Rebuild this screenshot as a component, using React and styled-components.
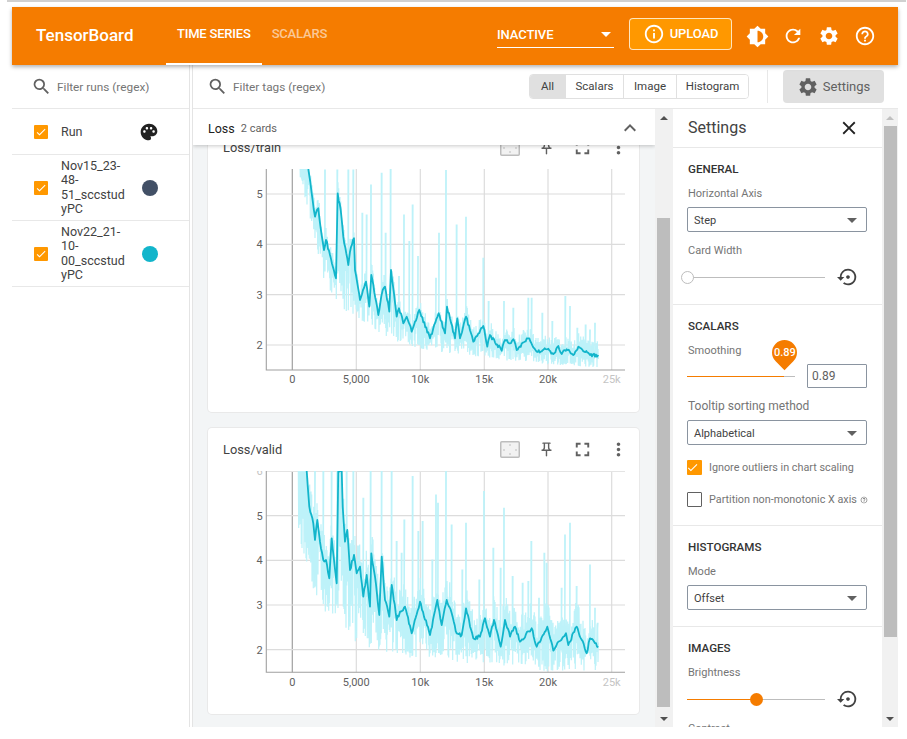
import React from "react";
import styled, { createGlobalStyle } from "styled-components";
import {
  MdBrightness6,
  MdCheck,
  MdClose,
  MdExpandLess,
  MdFullscreen,
  MdHelpOutline,
  MdInfoOutline,
  MdMoreVert,
  MdOutlinePushPin,
  MdPalette,
  MdRefresh,
  MdSearch,
  MdSettings,
  MdSettingsBackupRestore,
} from "react-icons/md";

const GlobalStyle = createGlobalStyle`
  html, body {
    margin: 0;
    height: 100%;
    overflow: hidden;
    background: #fff;
    font-family: Roboto, "Liberation Sans", sans-serif;
  }
  * { box-sizing: border-box; }
`;

const TopRule = styled.div`
  height: 2px;
  margin: 0 1px 5px 7px;
  background: #d0d0d0;
`;

const Shell = styled.div`
  width: 886px;
  height: 720px;
  margin-left: 12px;
  display: flex;
  flex-direction: column;
`;

/* header */
const Header = styled.header`
  height: 58px;
  flex: none;
  display: flex;
  align-items: center;
  padding-right: 15px;
  background: #f57c00;
  color: #fff;
  position: relative;
  z-index: 3;
  box-shadow: 0 2px 4px rgba(0, 0, 0, 0.3);
`;

const Logo = styled.div`
  width: 154px;
  padding: 0 0 3px 24px;
  font-size: 17px;
  font-weight: 500;
`;

const Tab = styled.div`
  align-self: stretch;
  display: flex;
  align-items: center;
  padding: 0 ${(p) => (p.$active ? "11px" : "10px")} 3px;
  font-size: 13px;
  font-weight: 500;
  letter-spacing: -0.2px;
  color: ${(p) => (p.$active ? "#fff" : "rgba(255, 255, 255, 0.6)")};
  border-bottom: 2px solid ${(p) => (p.$active ? "#fff" : "transparent")};
`;

const ReloadSelect = styled.div`
  width: 117px;
  height: 24px;
  margin: 0 15px 0 auto;
  display: flex;
  align-items: center;
  justify-content: space-between;
  padding: 0 3px 2px 0;
  font-size: 13px;
  font-weight: 500;
  letter-spacing: -0.1px;
  border-bottom: 1px solid #fff;
`;

const Caret = styled.span`
  width: 0;
  height: 0;
  border-left: 5px solid transparent;
  border-right: 5px solid transparent;
  border-top: 5px solid ${(p) => p.$color || "#fff"};
`;

const UploadButton = styled.div`
  width: 103px;
  height: 32px;
  margin: 0 7px 4px 0;
  padding-bottom: 1px;
  display: flex;
  align-items: center;
  justify-content: center;
  gap: 5px;
  border: 1px solid rgba(255, 255, 255, 0.75);
  border-radius: 4px;
  background: #ff9800;
  font-size: 13px;
  font-weight: 500;
  letter-spacing: -0.1px;
`;

const HeaderIcon = styled.div`
  width: 36px;
  display: flex;
  justify-content: center;
`;

/* body */
const Body = styled.div`
  flex: 1;
  min-height: 0;
  display: flex;
`;

const RunsColumn = styled.aside`
  width: 178px;
  flex: none;
  margin-right: 2px;
  border-right: 1px solid #e4e4e4;
`;

const FilterBox = styled.div`
  height: 44px;
  display: flex;
  align-items: center;
  gap: 5px;
  padding-left: ${(p) => p.$inset}px;
  font-size: 11.8px;
  color: #757575;
  border-bottom: ${(p) => (p.$ruled ? "1px solid #e8e8e8" : "none")};
  svg {
    color: #616161;
  }
`;

const RunRow = styled.div`
  height: ${(p) => p.$height}px;
  display: flex;
  align-items: center;
  padding: ${(p) => (p.$nudge ? "1px" : "0")} 0 0 22px;
  border-bottom: 1px solid #e8e8e8;
`;

const Check = styled.span`
  width: ${(p) => p.$size}px;
  height: ${(p) => p.$size}px;
  flex: none;
  display: flex;
  align-items: center;
  justify-content: center;
  border-radius: 1px;
  background: ${(p) => (p.$on ? "#ff9800" : "#fff")};
  border: ${(p) => (p.$on ? "none" : "1.5px solid #616161")};
  color: #fff;
`;

const RunName = styled.div`
  width: 66px;
  margin-left: 13px;
  font-size: 12.5px;
  line-height: 14.3px;
  color: #424242;
  overflow-wrap: anywhere;
`;

const Swatch = styled.span`
  width: 16px;
  height: 16px;
  margin-left: 15px;
  border-radius: 50%;
  background: ${(p) => p.$color};
`;

const PaletteSlot = styled.span`
  width: 20px;
  margin-left: 12px;
  display: flex;
  color: #212121;
`;

const WorkColumn = styled.div`
  flex: 1;
  min-width: 0;
  display: flex;
  flex-direction: column;
  border-left: 1px solid #e4e4e4;
`;

const Toolbar = styled.div`
  height: 44px;
  flex: none;
  display: flex;
  align-items: center;
  border-bottom: 1px solid #e8e8e8;
`;

const Chips = styled.div`
  height: 25px;
  margin: 0 0 1px auto;
  display: flex;
  border: 1px solid #e0e0e0;
  border-radius: 4px;
  overflow: hidden;
`;

const Chip = styled.div`
  width: ${(p) => p.$width}px;
  display: flex;
  align-items: center;
  justify-content: center;
  font-size: 11.5px;
  color: #424242;
  background: ${(p) => (p.$active ? "#e0e0e0" : "#fff")};
  border-left: ${(p) => (p.$first ? "none" : "1px solid #e0e0e0")};
`;

const ToolDivider = styled.div`
  width: 1px;
  height: 33px;
  margin: 0 15px 0 18px;
  background: #e8e8e8;
`;

const SettingsButton = styled.div`
  width: 101px;
  height: 33px;
  margin-right: 14px;
  display: flex;
  align-items: center;
  justify-content: center;
  gap: 4px;
  border-radius: 4px;
  background: #e0e0e0;
  color: #616161;
  font-size: 13px;
`;

const Panes = styled.div`
  flex: 1;
  min-height: 0;
  display: flex;
`;

const Main = styled.main`
  width: 462px;
  flex: none;
  display: flex;
  flex-direction: column;
  overflow: hidden;
  background: #f3f5f6;
`;

const GroupBar = styled.div`
  height: 36px;
  flex: none;
  display: flex;
  align-items: center;
  gap: 6px;
  padding: 2px 13px 0 15px;
  background: #fff;
  font-size: 12.5px;
  color: #212121;
  position: relative;
  z-index: 2;
  box-shadow: 0 1px 4px rgba(0, 0, 0, 0.22);
  small {
    font-size: 11px;
    color: #616161;
  }
  svg {
    margin-left: auto;
    color: #616161;
  }
`;

const Cards = styled.div`
  margin: -19px 0 0 15px;
  display: flex;
  flex-direction: column;
  gap: 16px;
`;

const Card = styled.section`
  width: 431px;
  height: 286px;
  flex: none;
  background: #fff;
  border-radius: 4px;
  box-shadow: 0 0 0 1px #e9e9e9;
`;

const CardHead = styled.div`
  height: 43px;
  display: flex;
  align-items: center;
  padding: 0 3px 0 15px;
  font-size: 12.8px;
  color: #424242;
`;

const CardTitle = styled.div`
  margin-right: auto;
`;

const CardAction = styled.span`
  width: 36px;
  display: flex;
  justify-content: center;
  color: #616161;
`;

const ChartSvg = styled.svg`
  display: block;
  text {
    font-family: Roboto, "Liberation Sans", sans-serif;
    font-size: 11px;
    fill: #616161;
    text-anchor: middle;
  }
`;

/* fake scrollbars, they are part of the picture */
const Scrollbar = styled.div`
  width: ${(p) => p.$width}px;
  flex: none;
  display: flex;
  flex-direction: column;
  background: #f1f1f1;
`;

const ScrollArrow = styled.div`
  height: 17px;
  flex: none;
  display: flex;
  align-items: center;
  justify-content: center;
  margin-top: ${(p) => (p.$down ? "auto" : "0")};
  &::before {
    content: "";
    border-left: 4px solid transparent;
    border-right: 4px solid transparent;
    border-bottom: ${(p) => (p.$down ? "none" : `4px solid ${p.$color}`)};
    border-top: ${(p) => (p.$down ? `4px solid ${p.$color}` : "none")};
  }
`;

const ScrollThumb = styled.div`
  height: ${(p) => p.$height}px;
  margin: ${(p) => p.$offset}px ${(p) => p.$side}px 0 2px;
  background: #bdbdbd;
`;

/* settings panel */
const Panel = styled.div`
  width: 209px;
  flex: none;
  overflow: hidden;
  background: #fff;
`;

const PanelHead = styled.div`
  height: 39px;
  display: flex;
  align-items: center;
  justify-content: space-between;
  padding: 0 22px 1px 15px;
  font-size: 16px;
  color: #424242;
  border-bottom: 1px solid #e8e8e8;
  svg {
    color: #212121;
  }
`;

const Section = styled.section`
  padding: 13px 14px ${(p) => (p.$tail ? p.$tail : 16)}px;
  border-bottom: ${(p) => (p.$open ? "none" : "1px solid #e8e8e8")};
`;

const Heading = styled.h3`
  margin: 0 0 8px 1px;
  font-size: 11.6px;
  line-height: 16px;
  font-weight: 500;
  color: #333;
`;

const FieldLabel = styled.div`
  margin: ${(p) => (p.$first ? "0" : "10px 0 0")};
  padding: 1px 0 0 1px;
  font-size: ${(p) => p.$size || 11}px;
  line-height: 15px;
  color: #757575;
`;

const SelectBox = styled.div`
  width: 180px;
  height: 25px;
  margin-top: 6px;
  display: flex;
  align-items: center;
  justify-content: space-between;
  padding: 1px 9px 0 6px;
  border: 1px solid #8a94a0;
  border-radius: 2px;
  font-size: 11px;
  color: #424242;
`;

const SliderRow = styled.div`
  width: 180px;
  height: ${(p) => p.$height}px;
  margin-top: ${(p) => p.$top}px;
  display: flex;
  align-items: center;
  gap: 12px;
  color: #424242;
`;

const Track = styled.div`
  width: ${(p) => p.$width}px;
  height: 1px;
  flex: none;
  position: relative;
  background: #bdbdbd;
`;

const TrackFill = styled.div`
  height: 1px;
  width: ${(p) => p.$fill}px;
  background: #f57c00;
`;

const Knob = styled.span`
  position: absolute;
  top: -6px;
  left: ${(p) => p.$at - 6}px;
  width: 13px;
  height: 13px;
  border-radius: 50%;
  background: ${(p) => (p.$empty ? "#fff" : "#f57c00")};
  border: ${(p) => (p.$empty ? "1px solid #bdbdbd" : "none")};
`;

const Bubble = styled.div`
  position: absolute;
  left: 85px;
  top: -36px;
  width: 25px;
  height: 25px;
  display: flex;
  align-items: center;
  justify-content: center;
  background: #f57c00;
  border-radius: 50% 50% 0 50%;
  transform: rotate(45deg);
  span {
    transform: rotate(-45deg);
    font-size: 11px;
    font-weight: 500;
    color: #fff;
  }
`;

const ValueInput = styled.div`
  width: 60px;
  height: 24px;
  display: flex;
  align-items: center;
  padding-left: 4px;
  border: 1px solid #8a94a0;
  border-radius: 1px;
  font-size: 12px;
  color: #616161;
`;

const CheckRow = styled.div`
  height: 15px;
  margin-top: ${(p) => p.$top}px;
  display: flex;
  align-items: center;
  gap: 7px;
  font-size: 10.8px;
  color: #757575;
  white-space: nowrap;
  svg {
    margin-left: -4px;
    flex: none;
  }
`;

const RULE_X = [0, 64, 128, 192, 255.7, 319.4];
const X_LABELS = ["0", "5,000", "10k", "15k", "20k", "25k"];

function rng(seed) {
  let a = seed;
  return () => {
    a = (a + 0x6d2b79f5) | 0;
    let t = Math.imul(a ^ (a >>> 15), 1 | a);
    t = (t + Math.imul(t ^ (t >>> 7), 61 | t)) ^ t;
    return ((t ^ (t >>> 14)) >>> 0) / 4294967296;
  };
}

function lerp(knots, x) {
  if (x <= knots[0][0]) return knots[0][1];
  for (let i = 1; i < knots.length; i++) {
    if (x <= knots[i][0]) {
      const [x0, y0] = knots[i - 1];
      const [x1, y1] = knots[i];
      return y0 + ((y1 - y0) * (x - x0)) / (x1 - x0);
    }
  }
  return knots[knots.length - 1][1];
}

// knots are read off the reference in 3x crop coordinates
function smoothLine(knots, seed, jitter) {
  const rand = rng(seed);
  const pts = [];
  knots.forEach(([x, y], i) => {
    pts.push([x, y]);
    const next = knots[i + 1];
    if (!next) return;
    for (let sx = x + 3; sx < next[0] - 2; sx += 3) {
      pts.push([sx, lerp(knots, sx) + (rand() - 0.5) * jitter]);
    }
  });
  return pts;
}

function rawLine(smooth, lower, spikes, seed, startX, amp) {
  const rand = rng(seed);
  const pts = [];
  let next = 0;
  let up = true;
  for (let x = startX; x <= 1195; x += 1) {
    while (next < spikes.length && spikes[next][0] <= x) {
      // spikes get a little width, they read as 1-2px bars in the reference
      pts.push([spikes[next][0] - 1, spikes[next][1]]);
      pts.push([spikes[next][0] + 1, spikes[next][1]]);
      next += 1;
    }
    const s = lerp(smooth, x);
    const l = lerp(lower, x);
    const y = up
      ? s - rand() * amp
      : l - Math.pow(rand(), 1.2) * Math.max(l - s, 0);
    pts.push([x, y]);
    up = !up;
  }
  return pts;
}

const TRAIN = {
  smooth: [[325,87],[335,160],[345,230],[355,205],[362,265],[372,330],[378,300],[390,345],[408,415],[413,160],[422,210],[430,290],[445,375],[450,335],[462,295],[465,390],[480,480],[498,425],[508,500],[514,405],[535,525],[548,450],[555,440],[568,515],[573,390],[590,530],[597,505],[610,550],[620,530],[635,575],[645,545],[658,510],[690,595],[700,565],[716,520],[735,580],[741,500],[765,595],[772,535],[780,595],[798,530],[820,605],[850,558],[862,620],[870,585],[905,632],[915,600],[930,610],[940,598],[950,630],[985,595],[1010,635],[1042,628],[1060,642],[1075,618],[1085,642],[1100,628],[1120,645],[1135,620],[1170,645],[1195,645]],
  lower: [[300,130],[340,270],[370,420],[410,490],[460,530],[520,570],[600,610],[700,635],[800,645],[900,660],[1000,670],[1190,682]],
  spikes: [[375,90],[412,90],[445,90],[460,90],[487,220],[500,225],[513,135],[545,100],[557,280],[572,87],[597,410],[612,225],[628,305],[638,195],[654,350],[708,415],[717,280],[738,92],[770,255],[798,232],[850,355],[866,485],[912,485],[940,505],[985,475],[995,475],[1027,520],[1057,545],[1096,470],[1110,500],[1132,565],[1157,555],[1170,570],[1185,550]],
  originY: 140,
  plotTop: 169,
  plotBottom: 370,
  grid: [[5, 194], [4, 244.3], [3, 294.7], [2, 345]],
  labelY: 379,
  seed: 11,
  amp: 42,
  startX: 300,
};

const VALID = {
  smooth: [[320,153],[328,260],[340,310],[345,360],[352,300],[360,365],[370,420],[378,420],[388,475],[395,355],[410,490],[415,153],[425,153],[428,260],[435,365],[442,330],[450,450],[462,405],[470,460],[480,440],[490,530],[500,465],[510,560],[514,400],[525,470],[538,585],[545,410],[555,540],[568,590],[575,495],[590,600],[600,575],[615,560],[635,640],[660,545],[690,645],[712,540],[725,615],[740,540],[755,580],[770,640],[785,645],[798,565],[820,655],[840,650],[855,595],[870,650],[882,600],[902,680],[915,600],[930,650],[945,620],[960,665],[995,625],[1010,680],[1042,620],[1060,692],[1075,665],[1098,640],[1105,675],[1130,620],[1160,700],[1170,655],[1195,682]],
  lower: [[295,340],[320,440],[355,560],[400,600],[470,680],[540,690],[630,715],[700,715],[800,730],[900,735],[1050,755],[1190,750]],
  spikes: [[300,153],[345,153],[370,153],[395,153],[412,153],[440,153],[460,153],[490,235],[512,153],[545,153],[575,153],[590,365],[605,400],[613,300],[638,170],[655,335],[668,305],[697,420],[708,225],[714,250],[738,153],[755,315],[787,450],[798,310],[838,480],[852,215],[880,385],[902,445],[912,265],[938,470],[968,490],[985,485],[994,365],[1017,535],[1033,400],[1040,430],[1085,505],[1095,345],[1110,310],[1130,500],[1170,435],[1185,565],[1193,610]],
  originY: 420,
  plotTop: 471,
  plotBottom: 672.3,
  grid: [[5, 515.7], [4, 560.3], [3, 605], [2, 649.7]],
  labelY: 681.7,
  seed: 29,
  amp: 80,
  startX: 295,
  topRule: true,
};

function Chart({ data }) {
  const toPage = (pts) =>
    pts.map(([x, y]) => `${(200 + x / 3).toFixed(1)},${(data.originY + y / 3).toFixed(1)}`).join(" ");
  const clipId = `plot-${data.seed}`;
  const raw = rawLine(data.smooth, data.lower, data.spikes, data.seed, data.startX, data.amp);
  const line = smoothLine(data.smooth, data.seed + 1, 11);

  return (
    <ChartSvg width="431" height="243" viewBox={`208 ${data.plotTop} 431 243`}>
      <defs>
        <clipPath id={clipId}>
          <rect x="266" y={data.plotTop} width="360" height={data.plotBottom - data.plotTop} />
        </clipPath>
      </defs>
      {RULE_X.map((dx, i) => (
        <line
          key={dx}
          x1={292.3 + dx}
          x2={292.3 + dx}
          y1={data.plotTop}
          y2={data.plotBottom}
          stroke={i === 0 ? "#a0a0a0" : "#dcdcdc"}
          strokeWidth="1.2"
        />
      ))}
      {data.grid.map(([, y]) => (
        <line key={y} x1="266.3" x2="625" y1={y} y2={y} stroke="#dcdcdc" strokeWidth="1.2" />
      ))}
      {data.topRule && (
        <line x1="266.3" x2="625" y1={data.plotTop + 0.5} y2={data.plotTop + 0.5} stroke="#e4e4e4" />
      )}
      <g clipPath={`url(#${clipId})`}>
        <polyline points={toPage(raw)} fill="none" stroke="#bdf2f9" strokeWidth="1.2" />
        <polyline points={toPage(line)} fill="none" stroke="#12b5cb" strokeWidth="1.8" strokeLinejoin="round" />
      </g>
      <path
        d={`M266.3 ${data.plotTop}V${data.plotBottom}H625`}
        fill="none"
        stroke="#a0a0a0"
        strokeWidth="1.1"
      />
      {data.topRule && (
        <text x="259.5" y={data.plotTop + 4} style={{ fill: "#c4c4c4" }}>
          6
        </text>
      )}
      {data.grid.map(([label, y]) => (
        <text key={label} x="259.5" y={y + 4}>
          {label}
        </text>
      ))}
      {X_LABELS.map((label, i) => (
        <text key={label} x={292.3 + RULE_X[i]} y={data.labelY + 4} style={i === 5 ? { fill: "#c4c4c4" } : undefined}>
          {label}
        </text>
      ))}
    </ChartSvg>
  );
}

function FitIcon() {
  return (
    <svg width="20" height="17" viewBox="0 0 20 17">
      <rect x="0.75" y="0.75" width="18.5" height="15.5" rx="1" fill="#f2f2f2" stroke="#bdbdbd" strokeWidth="1.5" />
      <g fill="#bdbdbd">
        <rect x="9" y="3.5" width="2" height="1" />
        <rect x="9" y="12.5" width="2" height="1" />
        <rect x="3.5" y="8" width="1" height="2" />
        <rect x="15.5" y="8" width="1" height="2" />
      </g>
    </svg>
  );
}

function ChartCard({ title, data }) {
  return (
    <Card>
      <CardHead>
        <CardTitle>{title}</CardTitle>
        <CardAction>
          <FitIcon />
        </CardAction>
        <CardAction>
          <MdOutlinePushPin size={17} />
        </CardAction>
        <CardAction>
          <MdFullscreen size={23} />
        </CardAction>
        <CardAction>
          <MdMoreVert size={21} />
        </CardAction>
      </CardHead>
      <Chart data={data} />
    </Card>
  );
}

function Bar({ width, side, offset, height, upColor }) {
  return (
    <Scrollbar $width={width}>
      <ScrollArrow $color={upColor} />
      <ScrollThumb $offset={offset} $height={height} $side={side} />
      <ScrollArrow $down $color="#505050" />
    </Scrollbar>
  );
}

function Select({ value }) {
  return (
    <SelectBox>
      {value}
      <Caret $color="#616161" />
    </SelectBox>
  );
}

function App() {
  return (
    <>
      <GlobalStyle />
      <TopRule />
      <Shell>
        <Header>
          <Logo>TensorBoard</Logo>
          <Tab $active>TIME SERIES</Tab>
          <Tab>SCALARS</Tab>
          <ReloadSelect>
            INACTIVE
            <Caret />
          </ReloadSelect>
          <UploadButton>
            <MdInfoOutline size={22} />
            UPLOAD
          </UploadButton>
          <HeaderIcon>
            <MdBrightness6 size={23} />
          </HeaderIcon>
          <HeaderIcon>
            <MdRefresh size={22} />
          </HeaderIcon>
          <HeaderIcon>
            <MdSettings size={22} />
          </HeaderIcon>
          <HeaderIcon>
            <MdHelpOutline size={22} />
          </HeaderIcon>
        </Header>
        <Body>
          <RunsColumn>
            <FilterBox $inset={19} $ruled>
              <MdSearch size={21} />
              Filter runs (regex)
            </FilterBox>
            <RunRow $height={46} $nudge>
              <Check $on $size={14}>
                <MdCheck size={12} />
              </Check>
              <RunName>Run</RunName>
              <PaletteSlot>
                <MdPalette size={20} />
              </PaletteSlot>
            </RunRow>
            <RunRow $height={66}>
              <Check $on $size={14}>
                <MdCheck size={12} />
              </Check>
              <RunName>Nov15_23-48-51_sccstudyPC</RunName>
              <Swatch $color="#425066" />
            </RunRow>
            <RunRow $height={66}>
              <Check $on $size={14}>
                <MdCheck size={12} />
              </Check>
              <RunName>Nov22_21-10-00_sccstudyPC</RunName>
              <Swatch $color="#12b5cb" />
            </RunRow>
          </RunsColumn>
          <WorkColumn>
            <Toolbar>
              <FilterBox $inset={14}>
                <MdSearch size={21} />
                Filter tags (regex)
              </FilterBox>
              <Chips>
                <Chip $active $first $width={35}>
                  All
                </Chip>
                <Chip $width={58}>Scalars</Chip>
                <Chip $width={53}>Image</Chip>
                <Chip $width={72}>Histogram</Chip>
              </Chips>
              <ToolDivider />
              <SettingsButton>
                <MdSettings size={22} />
                Settings
              </SettingsButton>
            </Toolbar>
            <Panes>
              <Main>
                <GroupBar>
                  Loss <small>2 cards</small>
                  <MdExpandLess size={24} />
                </GroupBar>
                <Cards>
                  <ChartCard title="Loss/train" data={TRAIN} />
                  <ChartCard title="Loss/valid" data={VALID} />
                </Cards>
              </Main>
              <Bar width={18} side={3} offset={92} height={489} upColor="#505050" />
              <Panel>
                <PanelHead>
                  Settings
                  <MdClose size={22} />
                </PanelHead>
                <Section>
                  <Heading>GENERAL</Heading>
                  <FieldLabel $first>Horizontal Axis</FieldLabel>
                  <Select value="Step" />
                  <FieldLabel>Card Width</FieldLabel>
                  <SliderRow $height={22} $top={8}>
                    <Track $width={138}>
                      <Knob $at={0} $empty />
                    </Track>
                    <MdSettingsBackupRestore size={22} />
                  </SliderRow>
                </Section>
                <Section $tail={18}>
                  <Heading>SCALARS</Heading>
                  <FieldLabel $first>Smoothing</FieldLabel>
                  <SliderRow $height={24} $top={6}>
                    <Track $width={108}>
                      <TrackFill $fill={97} />
                      <Bubble>
                        <span>0.89</span>
                      </Bubble>
                    </Track>
                    <ValueInput>0.89</ValueInput>
                  </SliderRow>
                  <FieldLabel $size={12}>Tooltip sorting method</FieldLabel>
                  <Select value="Alphabetical" />
                  <CheckRow $top={15}>
                    <Check $on $size={15}>
                      <MdCheck size={13} />
                    </Check>
                    Ignore outliers in chart scaling
                  </CheckRow>
                  <CheckRow $top={17}>
                    <Check $size={15} />
                    Partition non-monotonic X axis
                    <MdHelpOutline size={8} />
                  </CheckRow>
                </Section>
                <Section>
                  <Heading>HISTOGRAMS</Heading>
                  <FieldLabel $first>Mode</FieldLabel>
                  <Select value="Offset" />
                </Section>
                <Section $open>
                  <Heading>IMAGES</Heading>
                  <FieldLabel $first>Brightness</FieldLabel>
                  <SliderRow $height={22} $top={8}>
                    <Track $width={138}>
                      <TrackFill $fill={69} />
                      <Knob $at={69} />
                    </Track>
                    <MdSettingsBackupRestore size={22} />
                  </SliderRow>
                  <FieldLabel>Contrast</FieldLabel>
                </Section>
              </Panel>
              <Bar width={16} side={1} offset={0} height={511} upColor="#c0c0c0" />
            </Panes>
          </WorkColumn>
        </Body>
      </Shell>
    </>
  );
}

export default App;
